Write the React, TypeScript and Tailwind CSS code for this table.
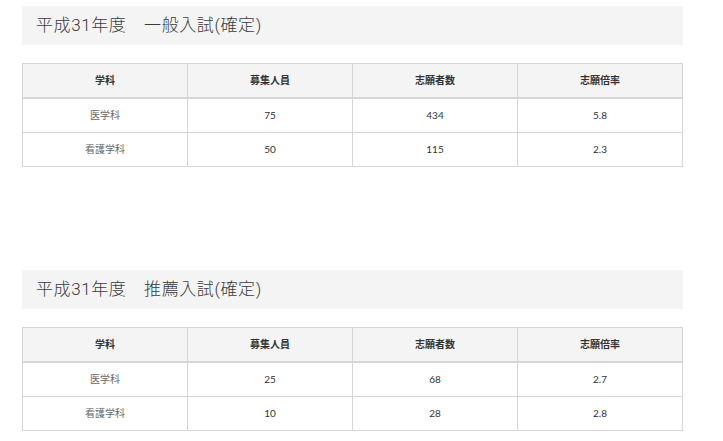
import React from "react";

type Row = [string, string, string, string];

const headers = ["学科", "募集人員", "志願者数", "志願倍率"];

function Section({ title, rows }: { title: string; rows: Row[] }) {
  return (
    <div>
      <div className="h-[39px] bg-[#f4f4f4] flex items-center pl-[14px]">
        <h2
          className="text-[17px] leading-none text-[#3a3a3a] font-light tracking-[0.6px]"
          style={{ fontFamily: '"Roboto", "Noto Sans CJK JP", sans-serif' }}
        >
          {title}
        </h2>
      </div>
      <div className="mt-[18px] border-l border-t border-[#d6d6d6] grid grid-cols-4">
        {headers.map((h) => (
          <div
            key={h}
            className="h-[35px] bg-[#f4f4f4] border-r border-b-2 border-[#d6d6d6] flex items-center justify-center text-[10px] font-bold text-[#333]"
          >
            {h}
          </div>
        ))}
        {rows.map((r, i) =>
          r.map((c, j) => (
            <div
              key={i + "-" + j}
              className={
                "h-[34px] border-r border-b border-[#d6d6d6] flex items-center justify-center text-[10px] " +
                (j === 0 ? "text-[#666]" : "text-[#333]")
              }
            >
              {c}
            </div>
          ))
        )}
      </div>
    </div>
  );
}

export default function App() {
  return (
    <div
      className="w-[723px] h-[441px] bg-white overflow-hidden"
      style={{ fontFamily: '"Lato", "Noto Sans CJK JP", sans-serif' }}
    >
      <div className="ml-[22px] w-[661px] pt-[6px] flex flex-col gap-[103px]">
        <Section
          title="平成31年度　一般入試(確定)"
          rows={[
            ["医学科", "75", "434", "5.8"],
            ["看護学科", "50", "115", "2.3"],
          ]}
        />
        <Section
          title="平成31年度　推薦入試(確定)"
          rows={[
            ["医学科", "25", "68", "2.7"],
            ["看護学科", "10", "28", "2.8"],
          ]}
        />
      </div>
    </div>
  );
}
